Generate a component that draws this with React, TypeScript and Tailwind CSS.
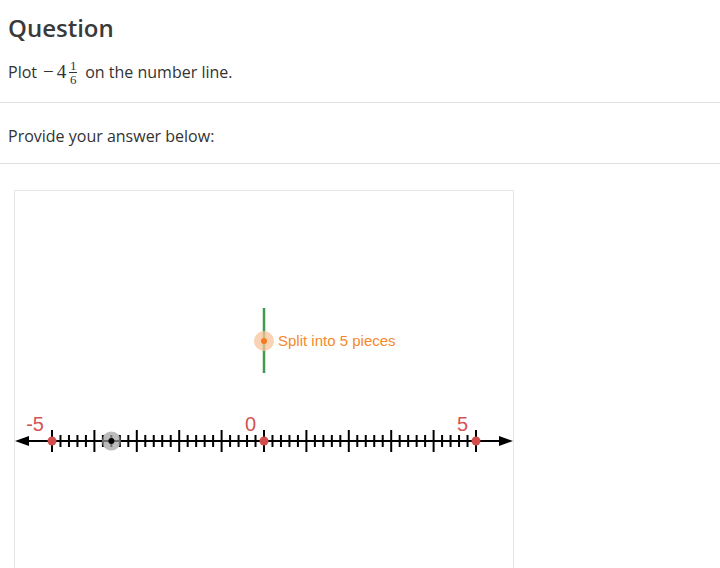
import React from "react";

const UNIT = 42.4;
const ZERO_X = 264;
const AXIS_Y = 441;

const px = (v: number) => ZERO_X + v * UNIT;

function NumberLine() {
  const ticks: { x: number; major: boolean }[] = [];
  for (let i = -25; i <= 25; i++) {
    ticks.push({ x: px(i / 5), major: i % 5 === 0 });
  }
  const labels = [-5, 0, 5];

  return (
    <svg width="498" height="400" className="block">
      <g transform="translate(-15,-191)">
        {/* guide: split into pieces */}
        <line x1={264} y1={308} x2={264} y2={373} stroke="#3f9a50" strokeWidth={2.5} />
        <circle cx={264} cy={341} r={10} fill="#f8c49b" opacity={0.75} />
        <circle cx={264} cy={341} r={3} fill="#f57b1c" />
        <text x={278} y={346} fontSize={15} fill="#f5892a" fontFamily="'Liberation Sans', Arial, sans-serif">
          Split into 5 pieces
        </text>

        {/* axis */}
        <line x1={26} y1={AXIS_Y} x2={502} y2={AXIS_Y} stroke="#000" strokeWidth={2} />
        <polygon points={`15,${AXIS_Y} 29,${AXIS_Y - 5} 29,${AXIS_Y + 5}`} fill="#000" />
        <polygon points={`513,${AXIS_Y} 499,${AXIS_Y - 5} 499,${AXIS_Y + 5}`} fill="#000" />

        {ticks.map((t, i) => (
          <line
            key={i}
            x1={t.x}
            x2={t.x}
            y1={t.major ? AXIS_Y - 11 : AXIS_Y - 6}
            y2={t.major ? AXIS_Y + 11 : AXIS_Y + 6}
            stroke="#000"
            strokeWidth={2}
          />
        ))}

        {/* plotted point */}
        <circle cx={px(-3.6)} cy={AXIS_Y} r={9.5} fill="#9e9e9e" opacity={0.7} />
        <circle cx={px(-3.6)} cy={AXIS_Y} r={3} fill="#000" />

        {labels.map((v) => (
          <g key={v}>
            <circle cx={px(v)} cy={AXIS_Y} r={4.5} fill="#d24c4c" />
            <text
              x={px(v) - 8}
              y={431}
              fontSize={20}
              textAnchor="end"
              fill="#d65353"
              fontFamily="'Liberation Sans', Arial, sans-serif"
            >
              {v}
            </text>
          </g>
        ))}
      </g>
    </svg>
  );
}

export default function App() {
  return (
    <div className="min-h-[568px] bg-white text-[#333] font-['Open_Sans',sans-serif]">
      <div className="h-[103px] border-b border-[#e0e0e0] px-2">
        <h1 className="pt-[12px] text-[24px] leading-[32px] font-semibold text-[#3a3a3a]">Question</h1>
        <div className="mt-[16px] flex h-[24px] items-center text-[16px] leading-[24px]">
          <span>Plot</span>
          <span className="ml-[6px] mr-[8px] flex items-center font-['Liberation_Serif',serif] text-[19px]">
            <span className="mr-[3px]">−</span>
            <span>4</span>
            <span className="ml-[3px] flex flex-col items-center text-[13px] leading-[11px]">
              <span>1</span>
              <span className="my-[1px] h-px w-[8px] bg-[#333]" />
              <span>6</span>
            </span>
          </span>
          <span>on the number line.</span>
        </div>
      </div>
      <div className="flex h-[61px] items-center border-b border-[#e0e0e0] px-2 pt-[6px] text-[16px]">
        Provide your answer below:
      </div>
      <div className="ml-[14px] mt-[26px] h-[400px] w-[500px] border border-[#e6e6e6] bg-white">
        <NumberLine />
      </div>
    </div>
  );
}
